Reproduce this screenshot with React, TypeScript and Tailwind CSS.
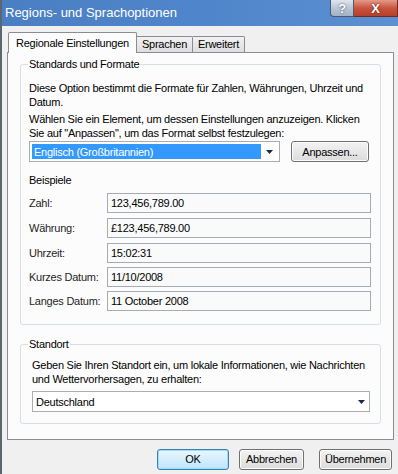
import React from 'react';

const rows = [
  { label: 'Zahl:', value: '123,456,789.00' },
  { label: 'Währung:', value: '£123,456,789.00' },
  { label: 'Uhrzeit:', value: '15:02:31' },
  { label: 'Kurzes Datum:', value: '11/10/2008' },
  { label: 'Langes Datum:', value: '11 October 2008' },
];

const Arrow = () => (
  <svg width="7" height="4" viewBox="0 0 7 4" className="shrink-0">
    <path d="M0 0h7L3.5 4z" fill="#1b2847" />
  </svg>
);

const Button = ({ children, w, focused }: { children: React.ReactNode; w: string; focused?: boolean }) => (
  <div
    className={`${w} h-[21px] rounded-[3px] border flex items-center justify-center text-black ${
      focused
        ? 'border-[#3c7fb1] bg-gradient-to-b from-[#eaf6fd] to-[#bee6fd] shadow-[inset_0_0_0_1px_#9fdcf8]'
        : 'border-[#707070] bg-gradient-to-b from-[#f3f3f3] to-[#dcdcdc] shadow-[inset_0_0_0_1px_#fcfcfc]'
    }`}
  >
    {children}
  </div>
);

export default function App() {
  return (
    <div className="w-[398px] h-[474px] overflow-hidden bg-[#f0f0f0] border-l-2 border-[#5c6670] flex flex-col font-['Liberation_Sans',Arial,sans-serif] text-[11px] tracking-[-0.25px] text-black whitespace-nowrap">
      {/* title bar */}
      <div className="h-[26px] shrink-0 flex items-start justify-between bg-gradient-to-r from-[#4b7fc4] via-[#4f85ca] to-[#5b90d2]">
        <span className="pl-[3px] pt-[4px] text-[13px] leading-[18px] tracking-normal text-white">
          Regions- und Sprachoptionen
        </span>
        <div className="flex items-start">
          <div className="w-[24px] h-[17px] rounded-bl-[4px] border border-t-0 border-[#4a5a70] bg-gradient-to-b from-[#dfe6ee] via-[#b9c6d6] to-[#a2b2c6] flex items-center justify-center text-[13px] font-bold leading-none text-white [text-shadow:0_0_2px_#2b3a50]">
            ?
          </div>
          <div className="w-[44px] h-[17px] border border-t-0 border-l-0 border-[#6b2a22] bg-gradient-to-b from-[#e29a8a] via-[#c9533d] to-[#b4402c] flex items-center justify-center text-[13px] font-bold leading-none text-white [text-shadow:0_0_2px_#4a1208]">
            X
          </div>
        </div>
      </div>

      <div className="pl-[5px] pt-[6px] flex flex-col">
        {/* tabs */}
        <div className="flex items-end h-[20px] pl-[1px]">
          <div className="relative z-10 w-[129px] h-[21px] -mb-px border border-b-0 border-[#898c95] bg-[#fcfcfc] rounded-t-[2px] flex items-center justify-center leading-none">
            Regionale Einstellungen
          </div>
          <div className="w-[56px] h-[16px] border border-l-0 border-b-0 border-[#898c95] bg-gradient-to-b from-[#f2f2f2] to-[#dedede] rounded-tr-[2px] flex items-center justify-center leading-none">
            Sprachen
          </div>
          <div className="w-[52px] h-[16px] border border-l-0 border-b-0 border-[#898c95] bg-gradient-to-b from-[#f2f2f2] to-[#dedede] rounded-tr-[2px] flex items-center justify-center leading-none">
            Erweitert
          </div>
        </div>

        {/* panel */}
        <div className="w-[387px] h-[388px] border border-[#898c95] bg-[#fcfcfc]">
          <fieldset className="min-w-0 mt-[4px] mx-[12px] border border-[#d5dfe5] rounded-[3px]">
            <legend className="ml-[7px] px-[1px] leading-[15px]">Standards und Formate</legend>
            <div className="px-[8px] pt-[9px] pb-[13px] leading-[14px]">
              <p>Diese Option bestimmt die Formate für Zahlen, Währungen, Uhrzeit und</p>
              <p>Datum.</p>
              <p className="mt-[3px]">Wählen Sie ein Element, um dessen Einstellungen anzuzeigen. Klicken</p>
              <p>Sie auf "Anpassen", um das Format selbst festzulegen:</p>
              <div className="mt-[1px] flex items-center gap-[11px]">
                <div className="w-[251px] h-[21px] border border-[#abadb3] bg-white p-[2px] flex items-center">
                  <div className="flex-1 h-full bg-[#3399ff] text-white pl-[2px] flex items-center">Englisch (Großbritannien)</div>
                  <div className="w-[16px] flex justify-center">
                    <Arrow />
                  </div>
                </div>
                <Button w="w-[78px]">Anpassen...</Button>
              </div>
              <div className="mt-[11px]">Beispiele</div>
              <div className="mt-[6px] flex flex-col">
                {rows.map((r, i) => (
                  <div key={r.label} className={`flex items-center ${i === 0 ? '' : i < 3 ? 'mt-[5px]' : 'mt-[4px]'}`}>
                    <span className="w-[78px] text-[#1e1e1e]">{r.label}</span>
                    <div className="w-[264px] h-[20px] border border-[#a5acb5] bg-[#fafafa] pl-[3px] flex items-center">
                      {r.value}
                    </div>
                  </div>
                ))}
              </div>
            </div>
          </fieldset>

          <fieldset className="min-w-0 mt-[12px] mx-[12px] border border-[#d5dfe5] rounded-[3px]">
            <legend className="ml-[7px] px-[1px] leading-[15px]">Standort</legend>
            <div className="pl-[11px] pr-[10px] pt-[6px] pb-[11px] leading-[14px]">
              <p>Geben Sie Ihren Standort ein, um lokale Informationen, wie Nachrichten</p>
              <p>und Wettervorhersagen, zu erhalten:</p>
              <div className="mt-[5px] h-[21px] border border-[#abadb3] bg-white pl-[3px] flex items-center justify-between">
                <span>Deutschland</span>
                <div className="w-[16px] flex justify-center">
                  <Arrow />
                </div>
              </div>
            </div>
          </fieldset>
        </div>

        {/* footer buttons */}
        <div className="mt-[9px] flex justify-end pr-[6px]">
          <Button w="w-[72px]" focused>
            OK
          </Button>
          <div className="ml-[10px]">
            <Button w="w-[65px]">Abbrechen</Button>
          </div>
          <div className="ml-[15px]">
            <Button w="w-[73px]">Übernehmen</Button>
          </div>
        </div>
      </div>
    </div>
  );
}
